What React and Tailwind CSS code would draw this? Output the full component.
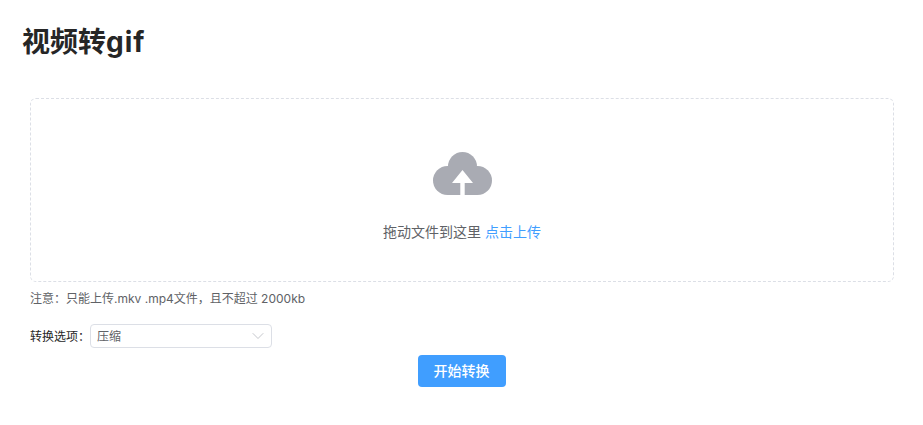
import React from 'react';
import { ChevronDown } from 'lucide-react';

const font = 'font-["Inter","Noto_Sans_CJK_SC",sans-serif]';

function UploadCloud() {
  return (
    <svg width="60" height="46" viewBox="0 0 60 46" className="block">
      <g fill="#a9abb3">
        <circle cx="15.5" cy="29.5" r="14.5" />
        <circle cx="45.5" cy="29.5" r="14.5" />
        <circle cx="30.5" cy="15.5" r="14.5" />
        <rect x="15.5" y="15" width="30" height="29" />
      </g>
      <path d="M30.5 19 L41 32 L32.7 32 L32.7 45 L28.3 45 L28.3 32 L20 32 Z" fill="#fff" />
    </svg>
  );
}

export default function App() {
  return (
    <div className={`h-[425px] w-[923px] overflow-hidden bg-white ${font}`}>
      <h1 className="pl-[22px] pt-[22px] text-[28px] font-bold leading-[40px] text-[#262626]">
        视频转<span className="tracking-[1px]">gif</span>
      </h1>

      <div className="ml-[30px] mt-[36px] w-[864px]">
        <div className="flex h-[184px] flex-col items-center rounded-md border border-dashed border-[#dcdfe6] pt-[52px]">
          <UploadCloud />
          <div className="mt-[25px] text-sm leading-5 text-[#606266]">
            拖动文件到这里 <span className="text-[#409eff]">点击上传</span>
          </div>
        </div>
        <div className="mt-[8px] text-xs leading-[18px] text-[#606266]">注意：只能上传.mkv .mp4文件，且不超过 2000kb</div>

        <div className="mt-[16px] flex items-center">
          <span className="pt-px text-xs text-[#262626]">转换选项：</span>
          <div className="flex h-6 w-[182px] items-center justify-between rounded border border-[#dcdfe6] pl-[6px] pr-[3px] text-xs text-[#606266]">
            <span className="pt-px">压缩</span>
            <ChevronDown size={20} strokeWidth={0.8} className="text-[#a8abb2]" />
          </div>
        </div>
      </div>

      <div className="mt-[7px] flex justify-center">
        <button className="h-8 w-[88px] rounded bg-[#409eff] text-sm font-medium text-white">开始转换</button>
      </div>
    </div>
  );
}
